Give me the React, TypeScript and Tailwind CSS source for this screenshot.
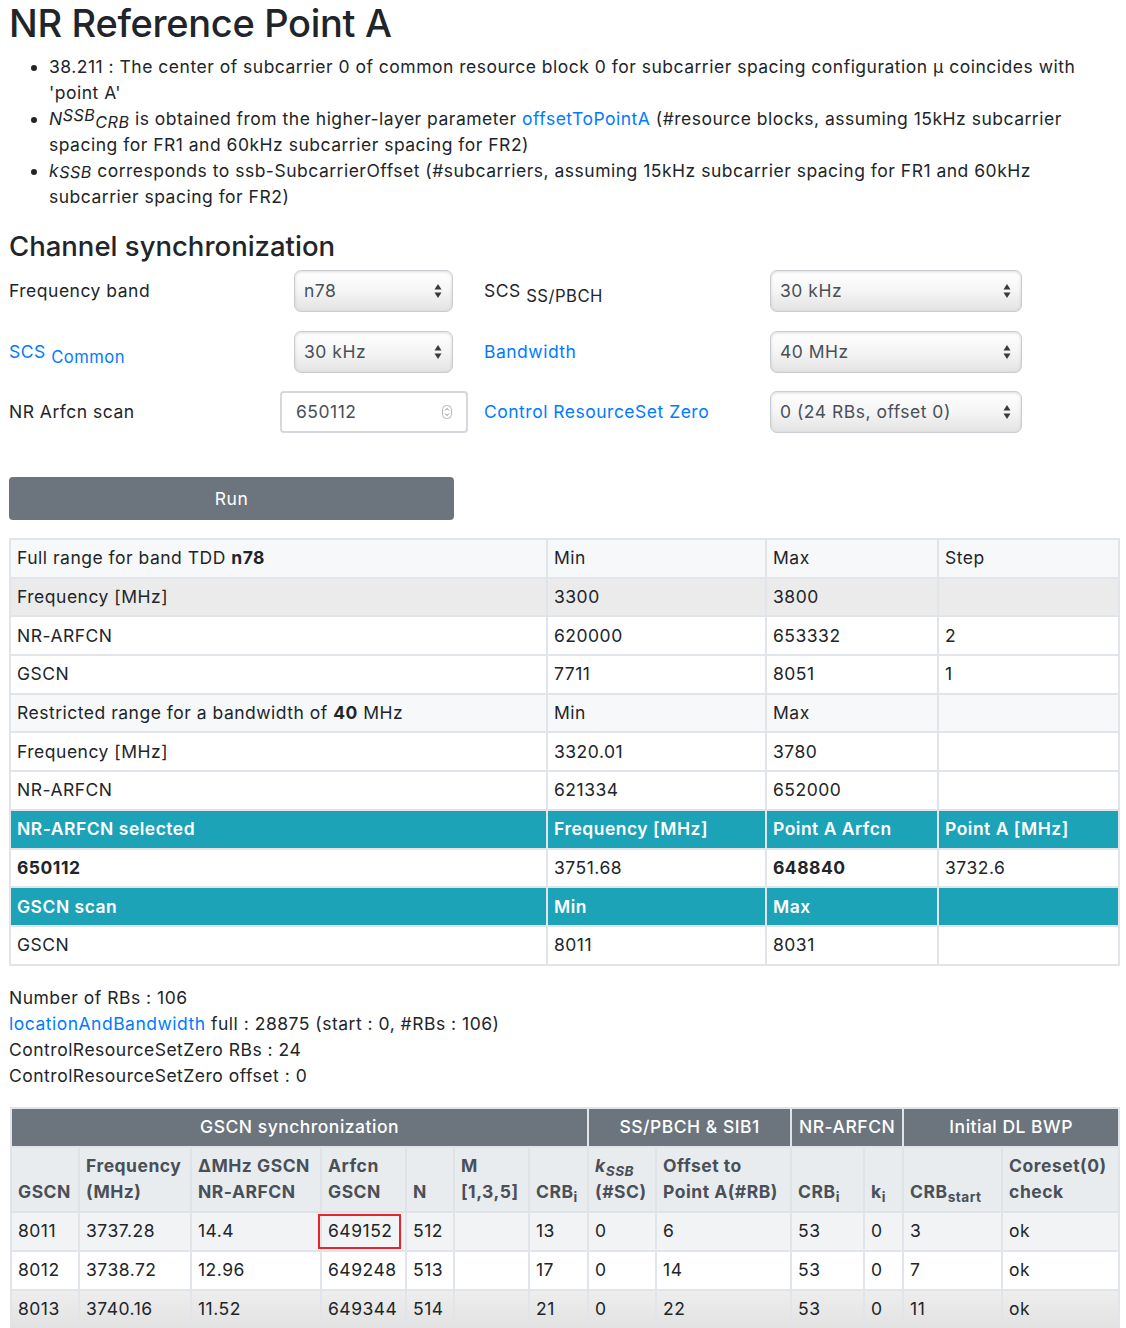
import type { ReactNode } from "react";

const font = "font-['Inter','Noto_Sans',sans-serif]";

function Arrows() {
  return (
    <svg width="8" height="18" viewBox="0 0 8 18" className="shrink-0">
      <path d="M4 2 L7.5 7.5 L0.5 7.5 Z" fill="#3a3a3a" />
      <path d="M4 16 L7.5 10.5 L0.5 10.5 Z" fill="#3a3a3a" />
    </svg>
  );
}

function Select({ value }: { value: string }) {
  return (
    <div className="flex h-[42px] items-center justify-between rounded-[7px] border border-[#c9ccd0] bg-gradient-to-b from-[#ffffff] via-[#f5f5f5] to-[#e3e3e3] pl-[9px] pr-[10px] text-[#495057] shadow-[inset_0_1px_3px_rgba(0,0,0,0.15)]">
      <span>{value}</span>
      <Arrows />
    </div>
  );
}

function NumberInput({ value }: { value: string }) {
  return (
    <div className="flex h-[42px] items-center justify-between rounded-[4px] border-2 border-[#d5d9dd] bg-white pl-[14px] pr-[14px] text-[#495057]">
      <span>{value}</span>
      <svg width="10" height="14" viewBox="0 0 10 14">
        <rect x="0.5" y="0.5" width="9" height="13" rx="4" fill="white" stroke="#b5b5b5" />
        <path d="M3 5.5 L5 3.5 L7 5.5" stroke="#777" fill="none" strokeWidth="0.9" />
        <path d="M3 8.5 L5 10.5 L7 8.5" stroke="#777" fill="none" strokeWidth="0.9" />
      </svg>
    </div>
  );
}

function Label({ children, link }: { children: ReactNode; link?: boolean }) {
  return <div className={link ? "text-[#007bff]" : "text-[#212529]"}>{children}</div>;
}

function Sub({ children }: { children: ReactNode }) {
  return <span className="relative top-[5px] text-[0.95em]">{children}</span>;
}

const t1: { cells: ReactNode[]; bg: string; text?: string }[] = [
  { cells: [<>Full range for band TDD <b>n78</b></>, "Min", "Max", "Step"], bg: "bg-[#f7f8fa]" },
  { cells: ["Frequency [MHz]", "3300", "3800", ""], bg: "bg-[#ebebeb]" },
  { cells: ["NR-ARFCN", "620000", "653332", "2"], bg: "bg-white" },
  { cells: ["GSCN", "7711", "8051", "1"], bg: "bg-white" },
  { cells: [<>Restricted range for a bandwidth of <b>40</b> MHz</>, "Min", "Max", ""], bg: "bg-[#f7f8fa]" },
  { cells: ["Frequency [MHz]", "3320.01", "3780", ""], bg: "bg-white" },
  { cells: ["NR-ARFCN", "621334", "652000", ""], bg: "bg-white" },
  { cells: ["NR-ARFCN selected", "Frequency [MHz]", "Point A Arfcn", "Point A [MHz]"], bg: "bg-[#1ca3b8]", text: "text-white font-semibold" },
  { cells: [<b>650112</b>, "3751.68", <b>648840</b>, "3732.6"], bg: "bg-white" },
  { cells: ["GSCN scan", "Min", "Max", ""], bg: "bg-[#1ca3b8]", text: "text-white font-semibold" },
  { cells: ["GSCN", "8011", "8031", ""], bg: "bg-white" },
];

const t2 = [
  ["8011", "3737.28", "14.4", "649152", "512", "", "13", "0", "6", "53", "0", "3", "ok"],
  ["8012", "3738.72", "12.96", "649248", "513", "", "17", "0", "14", "53", "0", "7", "ok"],
  ["8013", "3740.16", "11.52", "649344", "514", "", "21", "0", "22", "53", "0", "11", "ok"],
];

const w2 = [68, 112, 130, 85, 48, 75, 59, 68, 135, 73, 39, 99, 117];

const sub = "text-[0.78em] relative top-[0.3em] leading-none";

const h2cells: ReactNode[] = [
  "GSCN",
  <>Frequency<br />(MHz)</>,
  <>ΔMHz GSCN<br />NR-ARFCN</>,
  <>Arfcn<br />GSCN</>,
  "N",
  <>M<br />[1,3,5]</>,
  <>CRB<span className={sub}>i</span></>,
  <><i>k</i><span className={`${sub} italic`}>SSB</span><br />(#SC)</>,
  <>Offset to<br />Point A(#RB)</>,
  <>CRB<span className={sub}>i</span></>,
  <>k<span className={sub}>i</span></>,
  <>CRB<span className={sub}>start</span></>,
  <>Coreset(0)<br />check</>,
];

export default function App() {
  return (
    <div className={`${font} min-h-screen bg-white text-[17.5px] leading-[26px] tracking-[0.5px] text-[#212529]`}>
      <div className="w-[1109px] pl-[9px]">
        <h1 className="text-[38px] font-medium leading-[46px] tracking-[-0.3px]">NR Reference Point A</h1>

        <ul className="mt-[8px] list-disc pl-[40px]">
          <li>
            38.211 : The center of subcarrier 0 of common resource block 0 for subcarrier spacing configuration µ coincides with 'point A'
          </li>
          <li>
            <i>N</i>
            <sup className="relative -top-[4px] text-[0.92em] italic leading-none">SSB</sup>
            <sub className="relative top-[3px] text-[0.92em] italic leading-none">CRB</sub> is obtained from the higher-layer parameter{" "}
            <span className="text-[#007bff]">offsetToPointA</span> (#resource blocks, assuming 15kHz subcarrier spacing for FR1 and 60kHz subcarrier spacing for FR2)
          </li>
          <li>
            <i>k</i>
            <sub className="relative top-[1px] text-[0.92em] italic leading-none">SSB</sub> corresponds to ssb-SubcarrierOffset (#subcarriers, assuming 15kHz subcarrier spacing for FR1 and 60kHz subcarrier spacing for FR2)
          </li>
        </ul>

        <h2 className="mt-[19px] text-[27.5px] font-medium leading-[34px] tracking-normal">Channel synchronization</h2>

        <div className="mt-[7px] grid grid-cols-[271px_188px_302px_252px] items-center gap-y-[18.5px]">
          <Label>Frequency band</Label>
          <div className="pl-[14px] pr-[15px]"><Select value="n78" /></div>
          <div className="pl-[16px]"><Label>SCS <Sub>SS/PBCH</Sub></Label></div>
          <Select value="30 kHz" />

          <Label link>SCS <Sub>Common</Sub></Label>
          <div className="pl-[14px] pr-[15px]"><Select value="30 kHz" /></div>
          <div className="pl-[16px]"><Label link>Bandwidth</Label></div>
          <Select value="40 MHz" />

          <Label>NR Arfcn scan</Label>
          <NumberInput value="650112" />
          <div className="pl-[16px]"><Label link>Control ResourceSet Zero</Label></div>
          <Select value="0 (24 RBs, offset 0)" />
        </div>

        <button className="mt-[44px] h-[43px] w-[445px] rounded-[4px] bg-[#6c757d] text-white">Run</button>

        <table className="mt-[18px] w-[1109px] table-fixed border-collapse border-2 border-[#e1e4e8]">
          <colgroup>
            <col className="w-[537px]" />
            <col className="w-[219px]" />
            <col className="w-[172px]" />
            <col className="w-[181px]" />
          </colgroup>
          <tbody>
            {t1.map((r, i) => (
              <tr key={i} className={`${r.bg} ${r.text ?? ""} h-[38.7px]`}>
                {r.cells.map((c, j) => (
                  <td key={j} className="border-2 border-[#e1e4e8] px-[6px] py-0 align-middle">{c}</td>
                ))}
              </tr>
            ))}
          </tbody>
        </table>

        <div className="mt-[19px]">
          <div>Number of RBs : 106</div>
          <div><span className="text-[#007bff]">locationAndBandwidth</span> full : 28875 (start : 0, #RBs : 106)</div>
          <div>ControlResourceSetZero RBs : 24</div>
          <div>ControlResourceSetZero offset : 0</div>
        </div>

        <table className="ml-px mt-[18px] w-[1108px] table-fixed border-collapse border-2 border-[#e1e4e8]">
          <colgroup>
            {w2.map((w, i) => (
              <col key={i} style={{ width: w }} />
            ))}
          </colgroup>
          <thead>
            <tr className="h-[39px] bg-[#6c757d] text-center font-medium text-white">
              <th colSpan={7} className="border-2 border-[#e1e4e8] font-medium">GSCN synchronization</th>
              <th colSpan={2} className="border-2 border-[#e1e4e8] font-medium">SS/PBCH &amp; SIB1</th>
              <th colSpan={2} className="border-2 border-[#e1e4e8] font-medium">NR-ARFCN</th>
              <th colSpan={2} className="border-2 border-[#e1e4e8] font-medium">Initial DL BWP</th>
            </tr>
            <tr className="h-[65px] bg-[#e9ecef] text-left text-[#495057]">
              {h2cells.map((c, i) => (
                <th key={i} className="whitespace-nowrap border-2 border-[#dfe2e6] px-[6px] pb-[6px] align-bottom font-bold">{c}</th>
              ))}
            </tr>
          </thead>
          <tbody>
            {t2.map((r, i) => (
              <tr key={i} className={`h-[39px] ${i === 1 ? "bg-white" : i === 2 ? "bg-gradient-to-b from-[#eeeeee] to-[#e2e2e2]" : "bg-[#f2f3f5]"}`}>
                {r.map((c, j) => (
                  <td key={j} className="relative whitespace-nowrap border-2 border-[#e1e4e8] px-[6px] py-0">
                    {c}
                    {i === 0 && j === 3 && (
                      <div className="absolute bottom-[1px] left-[-4px] right-[4px] top-[1px] border-2 border-[#e8232a]" />
                    )}
                  </td>
                ))}
              </tr>
            ))}
          </tbody>
        </table>
      </div>
    </div>
  );
}
